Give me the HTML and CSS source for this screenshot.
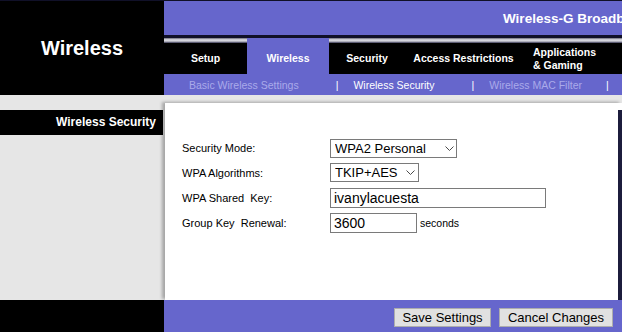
FILE: index.html
```html
<!DOCTYPE html>
<html lang="en">
<head>
  <meta charset="UTF-8">
  <title>Wireless Security</title>
  <link rel="stylesheet" href="styles.css">
</head>
<body>
  <div class="page">
    <header class="top">
      <div class="brand">
        <h1>Wireless</h1>
      </div>
      <div class="nav">
        <div class="banner">
          <span class="product">Wireless-G Broadband Router</span>
        </div>
        <div class="rule"></div>
        <ul class="tabs">
          <li class="tab tab-setup">Setup</li>
          <li class="tab tab-wireless active">Wireless</li>
          <li class="tab tab-security">Security</li>
          <li class="tab tab-access">Access Restrictions</li>
          <li class="tab tab-apps">Applications<br>&amp; Gaming</li>
        </ul>
        <div class="subnav">
          <span class="sub-item">Basic Wireless Settings</span>
          <span class="sep">|</span>
          <span class="sub-item current">Wireless Security</span>
          <span class="sep">|</span>
          <span class="sub-item">Wireless MAC Filter</span>
          <span class="sep last">|</span>
        </div>
      </div>
    </header>

    <main class="main">
      <aside class="side">
        <div class="side-title">Wireless Security</div>
      </aside>
      <section class="content">
        <form class="form">
          <label class="label" for="mode">Security Mode:</label>
          <div class="field">
            <span class="select">
              <select id="mode" class="select-mode">
                <option>WPA2 Personal</option>
              </select>
              <svg class="chevron" viewBox="0 0 9 5"><path d="M0.5 0.5 L4.5 4.5 L8.5 0.5" /></svg>
            </span>
          </div>

          <label class="label" for="algo">WPA Algorithms:</label>
          <div class="field">
            <span class="select">
              <select id="algo" class="select-algo">
                <option>TKIP+AES</option>
              </select>
              <svg class="chevron" viewBox="0 0 9 5"><path d="M0.5 0.5 L4.5 4.5 L8.5 0.5" /></svg>
            </span>
          </div>

          <label class="label" for="key">WPA Shared &nbsp;Key:</label>
          <div class="field">
            <input id="key" class="input input-key" type="text" value="ivanylacuesta">
          </div>

          <label class="label" for="renew">Group Key &nbsp;Renewal:</label>
          <div class="field">
            <input id="renew" class="input input-renew" type="text" value="3600">
            <span class="unit">seconds</span>
          </div>
        </form>
      </section>
    </main>

    <footer class="bottom">
      <div class="bottom-left"></div>
      <div class="actions">
        <button class="btn btn-save" type="button">Save Settings</button>
        <button class="btn btn-cancel" type="button">Cancel Changes</button>
      </div>
    </footer>
  </div>
</body>
</html>
```

FILE: styles.css
```css
:root {
  --purple: #6666cc;
  --grey: #e6e6e6;
  --sub-dim: #aaaaea;
  --field-border: #7a7a7a;
  --edge: #1c1c3c;
}

* {
  margin: 0;
  padding: 0;
  box-sizing: border-box;
}

body {
  font-family: "Liberation Sans", Arial, sans-serif;
  background-color: var(--grey);
  color: #000;
  width: 622px;
  height: 332px;
  overflow: hidden;
}

.page {
  display: flex;
  flex-direction: column;
  height: 332px;
}

/* Header */
.top {
  display: flex;
  height: 95px;
  border-top: 1px solid #101028;
}

.brand {
  width: 164px;
  background-color: #000;
  display: flex;
  align-items: center;
  justify-content: center;
}

.brand h1 {
  color: #fff;
  font-size: 20px;
  font-weight: 700;
  line-height: 1;
}

.nav {
  flex: 1;
  display: flex;
  flex-direction: column;
  min-width: 0;
}

.banner {
  height: 34px;
  background-color: var(--purple);
  padding-left: 339px;
  overflow: hidden;
  white-space: nowrap;
}

.product {
  color: #fff;
  font-size: 13.5px;
  font-weight: 700;
  line-height: 35px;
}

.rule {
  height: 3px;
  background-color: #101028;
}

.tabs {
  list-style: none;
  display: flex;
  height: 36px;
  background: linear-gradient(to bottom, #6a6a78 0, #e8e8ee 2px, #9a9aa8 4px, #202040 5px, #000 5px);
}

.tab {
  display: flex;
  align-items: center;
  justify-content: center;
  padding-top: 5px;
  color: #fff;
  font-size: 10.5px;
  font-weight: 700;
  text-align: center;
  line-height: 13px;
  white-space: nowrap;
}

.tab.active {
  background-color: var(--purple);
}

.tab-setup { width: 83px; }
.tab-wireless { width: 82px; }
.tab-security { width: 76px; }
.tab-access { width: 117px; }
.tab-apps {
  width: 86px;
  text-align: left;
  justify-content: flex-start;
  padding-left: 11px;
}

.subnav {
  height: 21px;
  background-color: var(--purple);
  display: flex;
  align-items: center;
  padding-left: 25px;
  font-size: 10.5px;
  white-space: nowrap;
}

.sub-item {
  color: var(--sub-dim);
}

.sub-item.current {
  color: #fff;
}

.sep {
  color: #fff;
  margin: 0 15px 0 37px;
}

.sep.last {
  margin-left: 24px;
}

/* Body */
.main {
  display: flex;
  height: 205px;
}

.side {
  width: 164px;
  padding-top: 15px;
}

.side-title {
  height: 25px;
  margin-right: 1px;
  background-color: #000;
  color: #fff;
  font-size: 12px;
  font-weight: 700;
  line-height: 25px;
  text-align: right;
  padding-right: 7px;
}

.content {
  flex: 1;
  margin-top: 8px;
  margin-left: 1px;
  background:
    linear-gradient(#fff, #fff) top right / 4px 7px no-repeat,
    linear-gradient(to left, var(--edge) 4px, #fff 4px);
  box-shadow: -3px -1px 3px rgba(0, 0, 0, 0.28);
  padding: 33px 0 0 17px;
}

.form {
  display: grid;
  grid-template-columns: 148px auto;
  grid-template-rows: 24px 25px 25px 25px;
  align-items: center;
}

.label {
  font-size: 11px;
}

.field {
  display: flex;
  align-items: center;
}

.select {
  position: relative;
  display: inline-block;
  height: 19px;
}

.select select {
  appearance: none;
  -webkit-appearance: none;
  height: 19px;
  border: 1px solid var(--field-border);
  border-radius: 0;
  background-color: #fff;
  color: #000;
  font-family: "Liberation Sans", Arial, sans-serif;
  font-size: 13px;
  padding: 0 0 0 4px;
}

.select-mode { width: 127px; }
.select-algo { width: 89px; }

.chevron {
  position: absolute;
  right: 3px;
  top: 7px;
  width: 9px;
  height: 5px;
  fill: none;
  stroke: #4a4a4a;
  stroke-width: 1;
}

.select-algo + .chevron {
  right: 4px;
}

.input {
  height: 20px;
  border: 1px solid var(--field-border);
  border-radius: 0;
  font-family: "Liberation Sans", Arial, sans-serif;
  font-size: 14px;
  color: #000;
  padding: 0 3px;
}

.input-key { width: 216px; }
.input-renew { width: 87px; }

.unit {
  font-size: 10.5px;
  margin-left: 3px;
}

/* Footer */
.bottom {
  display: flex;
  height: 32px;
}

.bottom-left {
  width: 164px;
  background-color: #000;
}

.actions {
  flex: 1;
  background-color: var(--purple);
  display: flex;
  justify-content: flex-end;
  align-items: flex-start;
  gap: 8px;
  padding: 8px 9px 0 0;
}

.btn {
  height: 19px;
  background-color: #e1e1e1;
  border: 1px solid #adadad;
  color: #000;
  font-family: "Liberation Sans", Arial, sans-serif;
  font-size: 13px;
  line-height: 17px;
  cursor: pointer;
}

.btn-save { width: 97px; }
.btn-cancel { width: 114px; }
```
